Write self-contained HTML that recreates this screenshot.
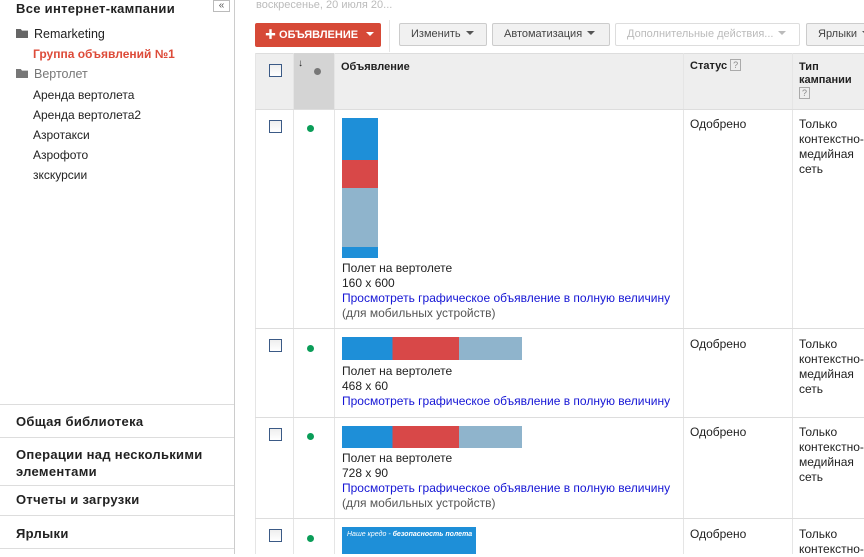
<!DOCTYPE html>
<html><head><meta charset="utf-8"><style>
*{box-sizing:border-box;margin:0;padding:0}
body{width:864px;height:554px;overflow:hidden;background:#fff;font-family:"Liberation Sans","Noto Sans CJK SC",sans-serif;font-size:12px;color:#222;position:relative}
.a{position:absolute}
.sb{left:0;top:0;width:235px;height:554px;border-right:1px solid #ccc}
.b{font-weight:bold;font-size:13px;letter-spacing:.3px;color:#222}
.it{font-size:12px;color:#222}
.fold{display:inline-block;width:12px;height:9px;background:#666;margin-right:6px;vertical-align:0px;clip-path:polygon(0 0,40% 0,50% 18%,100% 18%,100% 100%,0 100%)}
.sec{left:0;width:234px;border-top:1px solid #ddd;padding-left:16px}
.btn{top:23px;height:23px;border:1px solid #ccc;background:#f1f1f1;border-radius:2px;font-size:11px;color:#444;line-height:21px;padding-left:11px;white-space:nowrap}
.tri{display:inline-block;border-left:4px solid transparent;border-right:4px solid transparent;border-top:4px solid #555;vertical-align:2px;margin-left:5px}
.cb{width:13px;height:13px;border:1px solid #3b5a86;background:linear-gradient(#eee,#fff)}
.dot{width:7px;height:7px;border-radius:50%;background:#0a9d58}
.hl{background:#ddd;height:1px;left:255px;width:609px}
.vl{width:1px;background:#e5e5e5;top:53px;height:501px}
.lk{color:#1515d5}
.gr{color:#555}
.q{display:inline-block;width:11px;height:12px;border:1px solid #aaa;font-size:9px;color:#888;text-align:center;line-height:10px;font-weight:normal;vertical-align:1px}
</style></head><body>
<div class="a sb"></div>
<div class="a b" style="left:16px;top:1px;font-size:13px">Все интернет-кампании</div>
<div class="a" style="left:213px;top:0;width:17px;height:12px;border:1px solid #bbb;font-size:10px;line-height:9px;text-align:center;color:#555">«</div>
<div class="a it" style="left:16px;top:27px;font-size:12.5px"><span class="fold"></span>Remarketing</div>
<div class="a" style="left:33px;top:47px;font-weight:bold;color:#dd4b39;font-size:12px">Группа объявлений №1</div>
<div class="a it" style="left:16px;top:67px;color:#777;font-size:12.5px"><span class="fold" style="background:#777"></span>Вертолет</div>
<div class="a it" style="left:33px;top:88px">Аренда вертолета</div>
<div class="a it" style="left:33px;top:108px">Аренда вертолета2</div>
<div class="a it" style="left:33px;top:128px">Азротакси</div>
<div class="a it" style="left:33px;top:148px">Азрофото</div>
<div class="a it" style="left:33px;top:168px">зкскурсии</div>
<div class="a sec b" style="top:404px;height:34px;padding-top:9px">Общая библиотека</div>
<div class="a sec b" style="top:437px;height:48px;padding-top:8px;line-height:17px">Операции над несколькими<br>элементами</div>
<div class="a sec b" style="top:485px;height:33px;padding-top:6px">Отчеты и загрузки</div>
<div class="a sec b" style="top:515px;height:33px;padding-top:10px">Ярлыки</div>
<div class="a sec" style="top:548px;height:6px"></div>

<div class="a" style="left:256px;top:-1px;font-size:11px;color:#bbb">воскресенье, 20 июля 20...</div>
<div class="a" style="left:255px;top:23px;width:126px;height:24px;background:#d64937;border-radius:2px;color:#fff;font-weight:bold;font-size:11px;line-height:24px;padding-left:10px">✚ ОБЪЯВЛЕНИЕ <span class="tri" style="border-top-color:#fff"></span></div>
<div class="a" style="left:389px;top:20px;width:1px;height:32px;background:#e5e5e5"></div>
<div class="a btn" style="left:399px;width:88px">Изменить<span class="tri"></span></div>
<div class="a btn" style="left:492px;width:118px">Автоматизация<span class="tri"></span></div>
<div class="a btn" style="left:615px;width:185px;background:#fff;color:#bbb;border-color:#ddd">Дополнительные действия...<span class="tri" style="border-top-color:#bbb"></span></div>
<div class="a btn" style="left:806px;width:70px">Ярлыки<span class="tri"></span></div>

<div class="a" style="left:255px;top:53px;width:609px;height:56px;background:#eee;border-top:1px solid #ddd"></div>
<div class="a" style="left:293px;top:53px;width:41px;height:56px;background:#d4d4d4"></div>
<div class="a vl" style="left:255px"></div>
<div class="a vl" style="left:293px"></div>
<div class="a vl" style="left:334px"></div>
<div class="a vl" style="left:683px"></div>
<div class="a vl" style="left:792px"></div>
<div class="a hl" style="top:109px"></div>
<div class="a hl" style="top:328px"></div>
<div class="a hl" style="top:417px"></div>
<div class="a hl" style="top:518px"></div>

<div class="a cb" style="left:269px;top:64px"></div>
<div class="a" style="left:298px;top:58px;font-size:10px;font-weight:bold">↓</div>
<div class="a dot" style="left:314px;top:68px;background:#777"></div>
<div class="a" style="left:341px;top:61px;font-weight:bold;font-size:11px">Объявление</div>
<div class="a" style="left:690px;top:59px;font-weight:bold;font-size:11px">Статус <span class="q">?</span></div>
<div class="a" style="left:799px;top:61px;font-weight:bold;font-size:11px;line-height:13px">Тип<br>кампании<br><span class="q">?</span></div>

<div class="a cb" style="left:269px;top:120px"></div><div class="a dot" style="left:307px;top:125px"></div>
<div class="a" style="left:342px;top:118px;width:36px;height:140px;background:linear-gradient(#1e8fd8 0 30%,#d84848 30% 50%,#8fb4cc 50% 92%,#1e8fd8 92%)"></div>
<div class="a" style="left:342px;top:261px;line-height:15px">Полет на вертолете<br>160 x 600<br><span class="lk">Просмотреть графическое объявление в полную величину</span><br><span class="gr">(для мобильных устройств)</span></div>
<div class="a" style="left:690px;top:117px">Одобрено</div>
<div class="a" style="left:799px;top:117px;line-height:15px">Только<br>контекстно-<br>медийная<br>сеть</div>

<div class="a cb" style="left:269px;top:339px"></div><div class="a dot" style="left:307px;top:345px"></div>
<div class="a" style="left:342px;top:337px;width:180px;height:23px;background:linear-gradient(90deg,#1e8fd8 0 28%,#d84848 28% 65%,#8fb4cc 65%)"></div>
<div class="a" style="left:342px;top:364px;line-height:15px">Полет на вертолете<br>468 x 60<br><span class="lk">Просмотреть графическое объявление в полную величину</span></div>
<div class="a" style="left:690px;top:337px">Одобрено</div>
<div class="a" style="left:799px;top:337px;line-height:15px">Только<br>контекстно-<br>медийная<br>сеть</div>

<div class="a cb" style="left:269px;top:428px"></div><div class="a dot" style="left:307px;top:433px"></div>
<div class="a" style="left:342px;top:426px;width:180px;height:22px;background:linear-gradient(90deg,#1e8fd8 0 28%,#d84848 28% 65%,#8fb4cc 65%)"></div>
<div class="a" style="left:342px;top:451px;line-height:15px">Полет на вертолете<br>728 x 90<br><span class="lk">Просмотреть графическое объявление в полную величину</span><br><span class="gr">(для мобильных устройств)</span></div>
<div class="a" style="left:690px;top:425px">Одобрено</div>
<div class="a" style="left:799px;top:425px;line-height:15px">Только<br>контекстно-<br>медийная<br>сеть</div>

<div class="a cb" style="left:269px;top:529px"></div><div class="a dot" style="left:307px;top:535px"></div>
<div class="a" style="left:342px;top:527px;width:134px;height:27px;background:#1e8fd8;color:#fff;font-size:7px;font-style:italic;padding:4px 5px;white-space:nowrap;overflow:hidden">Наше кредо - <b>безопасность полета</b></div>
<div class="a" style="left:690px;top:527px">Одобрено</div>
<div class="a" style="left:799px;top:527px;line-height:15px">Только<br>контекстно-</div>
</body></html>
